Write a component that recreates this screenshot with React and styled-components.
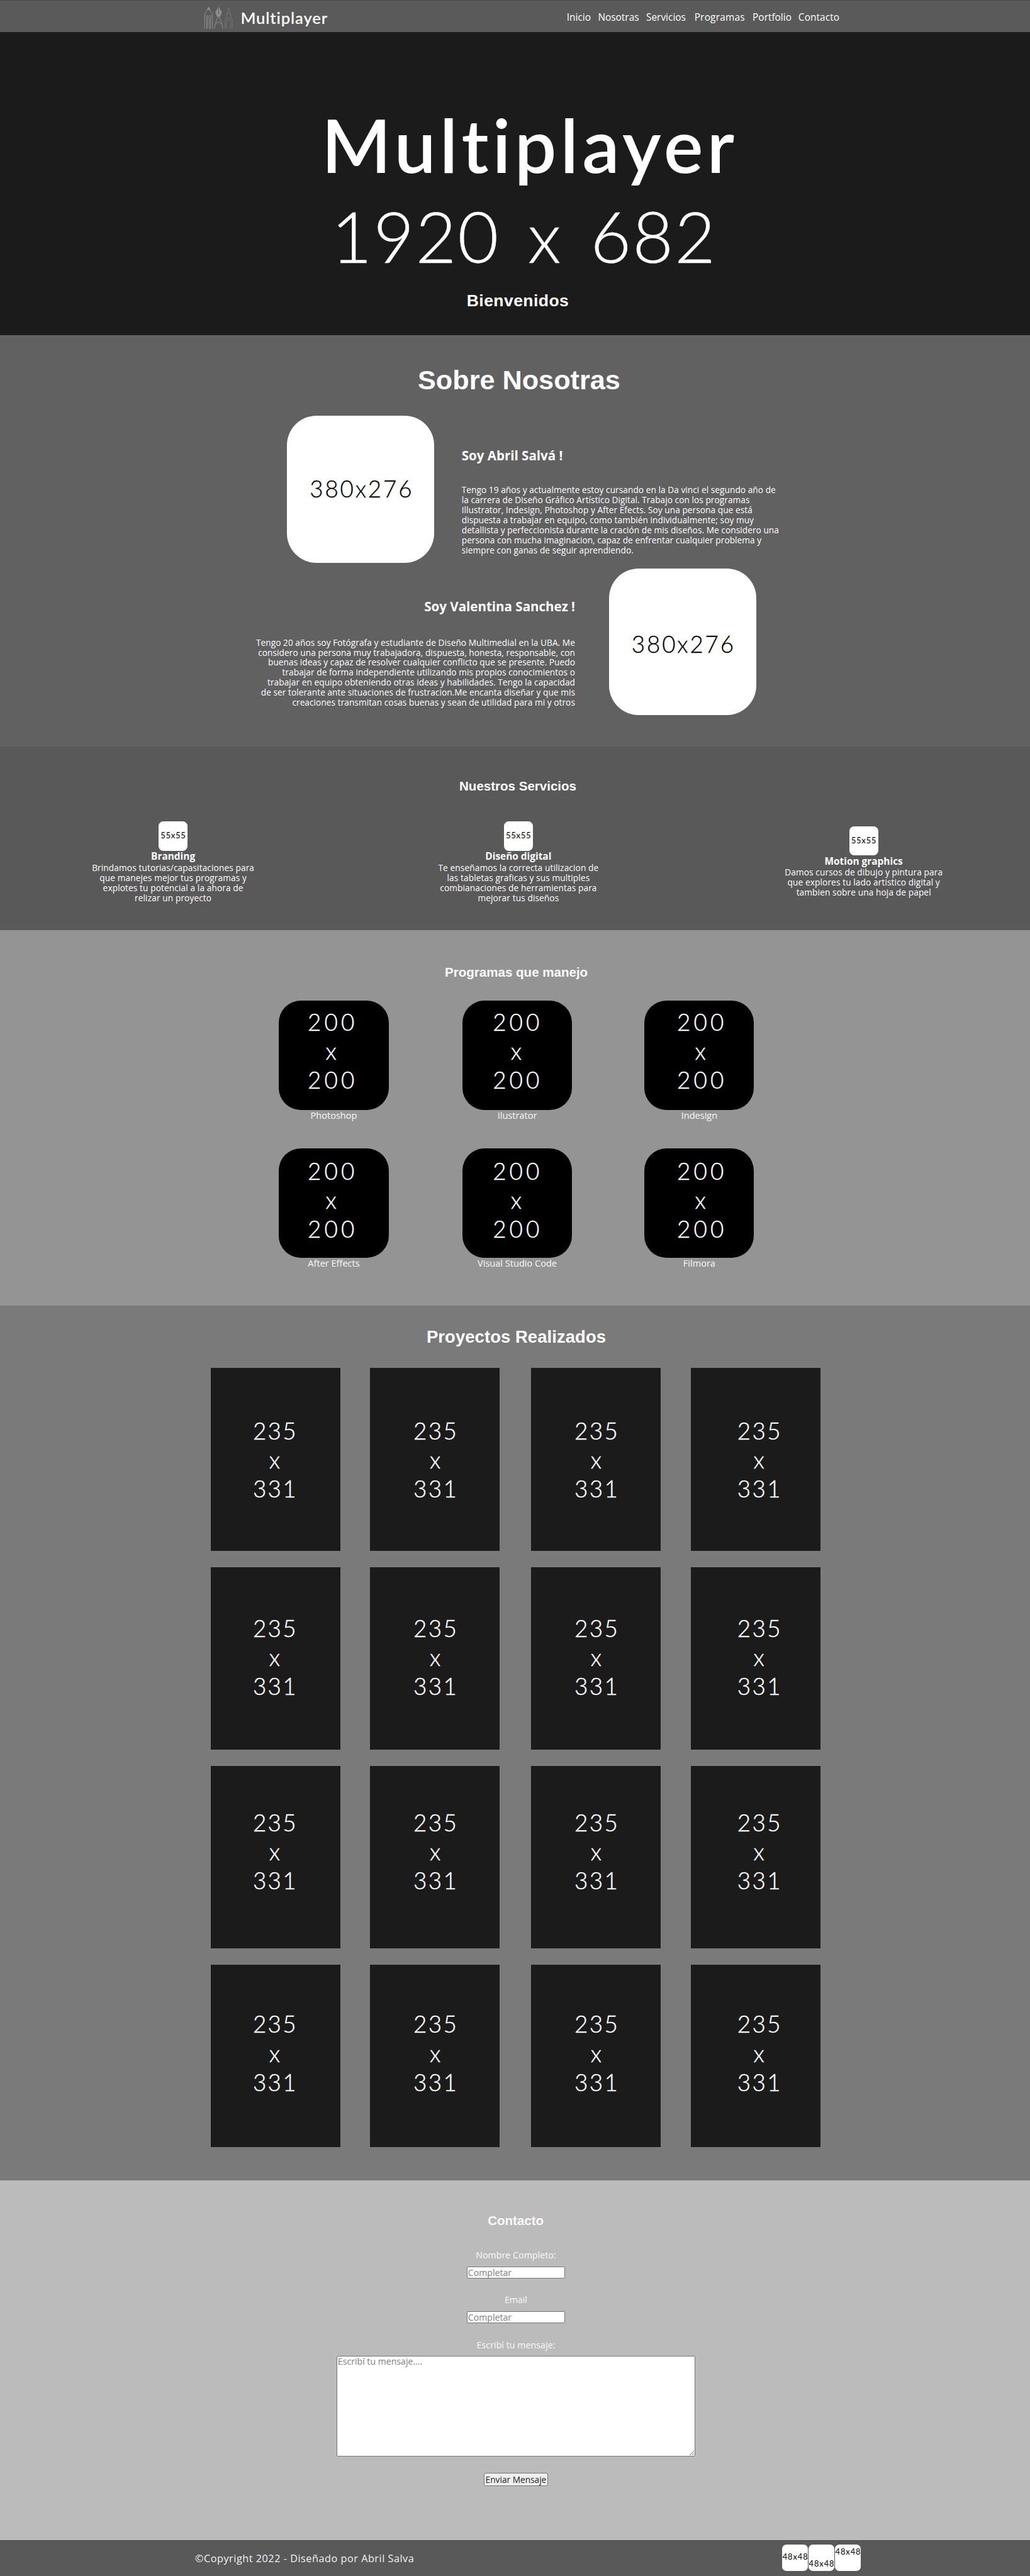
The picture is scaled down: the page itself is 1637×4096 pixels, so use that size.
import React from "react";
import styled, { createGlobalStyle, css } from "styled-components";

/* design pixel -> screen pixel */
const u = (n) => `${(n * 0.85617).toFixed(3)}px`;

const round = `"Open Sans", "Noto Sans", sans-serif`;
const display = `Lato, "Open Sans", sans-serif`;
const grotesk = `"Liberation Sans", Arial, sans-serif`;

const GlobalStyle = createGlobalStyle`
  * { box-sizing: border-box; margin: 0; padding: 0; }
  body { background: #bbbbbb; font-family: ${round}; }
`;

const centred = css`
  text-align: center;
  white-space: nowrap;
  letter-spacing: ${(p) => u(p.$ls || 0)};
  text-indent: ${(p) => u((p.$ls || 0) + 2 * (p.$dx || 0))};
`;

const Page = styled.div`
  width: 100%;
  height: ${u(4784)};
  overflow: hidden;
`;

const Header = styled.header`
  height: ${u(60)};
  display: flex;
  justify-content: space-between;
  align-items: center;
  padding: ${u(5)} ${u(330)} 0 ${u(378)};
  background: #5a5a5a;
  border-top: 1px solid #4c4c4c;
  color: #fff;
`;

const Brand = styled.div`
  display: flex;
  align-items: center;
  gap: ${u(14)};
`;

const BrandName = styled.span`
  font-family: ${display};
  font-size: ${u(30)};
  font-weight: 600;
  line-height: ${u(36)};
  letter-spacing: ${u(0.95)};
`;

const LogoArt = styled.svg`
  width: ${u(54.7)};
  height: ${u(42.3)};
  margin-top: ${u(-1)};
`;

const Nav = styled.nav`
  display: grid;
  grid-template-columns: ${[58, 89.5, 89.5, 108, 85, 100].map(u).join(" ")};
  font-size: ${u(18)};
  line-height: ${u(22)};
`;

const NavLink = styled.a`
  color: #fff;
  white-space: nowrap;
  letter-spacing: ${(p) => u(p.$ls)};
`;

const Hero = styled.section`
  height: ${u(562)};
  padding-top: ${u(138.6)};
  background: #1b1b1b;
  color: #fff;
`;

const HeroName = styled.h1`
  ${centred}
  font-family: ${display};
  font-size: ${u(138)};
  line-height: ${u(140)};
  font-weight: 600;
`;

const HeroSize = styled.p`
  ${centred}
  font-family: ${display};
  margin-top: ${u(34.7)};
  font-size: ${u(130.5)};
  line-height: ${u(130)};
  font-weight: 300;
  word-spacing: ${u(14)};
  -webkit-text-stroke: 0.6px #fff;
`;

const Title = styled.h2`
  ${centred}
  font-family: ${grotesk};
  font-weight: 700;
  font-size: ${(p) => u(p.$size || 24)};
  line-height: ${(p) => u(p.$line || 30)};
  margin-top: ${(p) => u(p.$top || 0)};
`;

const About = styled.section`
  height: ${u(764)};
  padding-top: ${u(54.5)};
  background: #616161;
  color: #fff;
`;

const Person = styled.article`
  display: flex;
  align-items: flex-start;
  margin-top: ${(p) => u(p.$top)};
  padding-left: ${(p) => u(p.$left)};
  gap: ${(p) => u(p.$gap)};
`;

const Portrait = styled.div`
  ${centred}
  flex: none;
  width: ${u(273.5)};
  height: ${u(272.7)};
  border-radius: ${u(55)};
  background: #fff;
  color: #000;
  font-family: ${display};
  font-size: ${u(43)};
  font-weight: 300;
  line-height: ${(p) => u(p.$line)};
  -webkit-text-stroke: 0.3px #000;
`;

const Bio = styled.div`
  width: ${u(627)};
  padding-top: ${(p) => u(p.$top)};
  text-align: ${(p) => (p.$right ? "right" : "left")};
`;

const BioName = styled.h3`
  font-size: ${u(24)};
  line-height: ${u(30)};
  font-weight: 700;
  margin-bottom: ${(p) => u(p.$gap)};
`;

const BioLine = styled.p`
  font-size: ${u(16)};
  line-height: ${u(18.55)};
  letter-spacing: ${u(0.05)};
  white-space: nowrap;
`;

const Services = styled.section`
  height: ${u(341)};
  padding-top: ${u(58.7)};
  background: #595959;
  color: #fff;
`;

const ServiceGrid = styled.div`
  display: grid;
  grid-template-columns: repeat(3, ${u(400)});
  column-gap: ${u(241)};
  margin-top: ${u(51.3)};
  padding-left: ${u(121.3)};
`;

const Service = styled.article`
  display: flex;
  flex-direction: column;
  align-items: center;
  padding-top: ${(p) => u(p.$top)};
`;

const ServiceIcon = styled.div`
  ${centred}
  width: ${u(54)};
  height: ${u(54)};
  border-radius: ${u(9)};
  background: #fff;
  color: #000;
  font-family: ${display};
  font-size: ${u(15.5)};
  font-weight: 400;
  line-height: ${u(51.5)};
`;

const ServiceName = styled.h3`
  ${centred}
  margin: ${u(2)} 0 ${u(2.2)};
  font-size: ${u(18)};
  line-height: ${u(18)};
  font-weight: 700;
`;

const ServiceLine = styled.p`
  ${centred}
  font-size: ${u(16)};
  line-height: ${u(18.65)};
`;

const Programs = styled.section`
  height: ${u(698)};
  padding-top: ${u(63)};
  background: #949494;
  color: #fafafa;
`;

const ProgramGrid = styled.div`
  display: grid;
  grid-template-columns: ${[340.5, 338, 203.5].map(u).join(" ")};
  row-gap: ${u(50.7)};
  margin-top: ${u(38.8)};
  padding-left: ${u(518)};
`;

const Program = styled.figure`
  width: ${u(203.3)};
`;

const ProgramTile = styled.div`
  height: ${u(203.3)};
  padding-top: ${(p) => u(p.$top)};
  border-radius: ${u(41)};
  background: #000;
  color: #fff;
`;

const SizeLine = styled.p`
  ${centred}
  font-family: ${display};
  font-size: ${u(43)};
  font-weight: 300;
  line-height: ${u(53.8)};
  -webkit-text-stroke: 0.4px #fff;
`;

const ProgramName = styled.figcaption`
  ${centred}
  font-size: ${u(17)};
  line-height: ${u(20)};
`;

const Portfolio = styled.section`
  height: ${u(1625)};
  padding-top: ${u(38)};
  background: #7a7a7a;
  color: #fff;
`;

const WorkGrid = styled.div`
  display: grid;
  grid-template-columns: ${[295.6, 299, 296.2, 241].map(u).join(" ")};
  row-gap: ${u(30.3)};
  margin-top: ${u(38)};
  padding-left: ${u(391.2)};
`;

const Work = styled.div`
  width: ${u(240.8)};
  height: ${u(339)};
  padding-top: ${(p) => u(p.$top)};
  background: #1b1b1b;
`;

const Contact = styled.section`
  height: ${u(667)};
  padding-top: ${u(58.7)};
  background: #bbbbbb;
  color: #fafafa;
`;

const Form = styled.form`
  display: flex;
  flex-direction: column;
  align-items: center;
  margin-top: ${u(39.8)};
  padding-left: ${u(3.4)};
`;

const Label = styled.label`
  ${centred}
  font-size: ${u(16.5)};
  line-height: ${u(20)};
  margin-bottom: ${u(10.5)};
`;

const field = css`
  border: 1px solid #767676;
  border-radius: 2px;
  background: #fff;
  color: #333;
  font-family: ${round};
  font-size: ${u(16.5)};
  padding: 0 1px;
  margin-bottom: ${u(30)};
  &::placeholder { color: #808080; }
`;

const Input = styled.input`
  ${field}
  width: ${u(182.5)};
  height: ${u(22.5)};
`;

const Message = styled.textarea`
  ${field}
  width: ${u(666)};
  height: ${u(187.6)};
  line-height: ${u(19)};
`;

const Send = styled.button`
  width: ${u(119)};
  height: ${u(24.5)};
  border: 1px solid #767676;
  border-radius: 3px;
  background: #efefef;
  color: #222;
  font-family: ${round};
  font-size: ${u(16)};
  white-space: nowrap;
`;

const Footer = styled.footer`
  height: ${u(67)};
  display: flex;
  justify-content: space-between;
  align-items: flex-start;
  padding: ${u(8)} ${u(314.5)} 0 ${u(362)};
  background: #595959;
  border-top: 1px solid #484848;
  color: #f2f2f2;
`;

const Copyright = styled.p`
  font-size: ${u(19)};
  line-height: ${u(51.5)};
  letter-spacing: ${u(0.6)};
  white-space: nowrap;
`;

const Socials = styled.div`
  display: flex;
  gap: ${u(1.7)};
`;

const Social = styled.div`
  ${centred}
  display: flex;
  justify-content: center;
  width: ${u(47.3)};
  height: ${u(49)};
  border-radius: ${u(8)};
  background: #fff;
  color: #000;
  font-family: ${display};
  font-size: ${u(15)};
  font-weight: 400;
  line-height: ${(p) => u(p.$line)};
`;

const Logo = () => (
  <LogoArt viewBox="55 33 164 127" fill="none" stroke="#8f8f8f" strokeWidth="3.5">
    <path d="M59 158V80L81 37l22 43v78M59 82c5 9 12 9 15 2 4 7 11 7 15 0 3 6 9 6 14-2M70 92v66M76 92v66M86 92v66M93 92v66" />
    <path d="M74 52l7-15 8 15z" fill="#8f8f8f" />
    <path d="M137 38l-17 28 10 24h14l10-24z" fill="#8f8f8f" />
    <path d="M137 42v24" stroke="#5a5a5a" />
    <circle cx="137" cy="70" r="4" fill="#5a5a5a" stroke="none" />
    <path d="M129 97h16M115 158v-13l14-44M160 158v-13l-15-44M122 134c5-16 26-16 30 0" />
    <g stroke="#747474">
      <path d="M190 54v-9l4-5 3 5v9zM186 72l3-17h9l3 17M180 98l4-26h18l5 26M173 158v-54l6-6h29l5 6v54M181 158v-48h23v48" />
    </g>
  </LogoArt>
);

const NAV = [
  ["Inicio", 0],
  ["Nosotras", 0],
  ["Servicios", 0],
  ["Programas", 0.25],
  ["Portfolio", 0],
  ["Contacto", 0.1],
];

const ABRIL = [
  "Tengo 19 años y actualmente estoy cursando en la Da vinci el segundo año de",
  "la carrera de Diseño Gráfico Artístico Digital. Trabajo con los programas",
  "Illustrator, Indesign, Photoshop y After Efects. Soy una persona que está",
  "dispuesta a trabajar en equipo, como también individualmente; soy muy",
  "detallista y perfeccionista durante la cración de mis diseños. Me considero una",
  "persona con mucha imaginacion, capaz de enfrentar cualquier problema y",
  "siempre con ganas de seguir aprendiendo.",
];

const VALENTINA = [
  "Tengo 20 años soy Fotógrafa y estudiante de Diseño Multimedial en la UBA. Me",
  "considero una persona muy trabajadora, dispuesta, honesta, responsable, con",
  "buenas ideas y capaz de resolver cualquier conflicto que se presente. Puedo",
  "trabajar de forma independiente utilizando mis propios conocimientos o",
  "trabajar en equipo obteniendo otras ideas y habilidades. Tengo la capacidad",
  "de ser tolerante ante situaciones de frustracion.Me encanta diseñar y que mis",
  "creaciones transmitan cosas buenas y sean de utilidad para mi y otros",
];

const SERVICES = [
  {
    name: "Branding",
    top: 0,
    lines: [
      "Brindamos tutorias/capasitaciones para",
      "que manejes mejor tus programas y",
      "explotes tu potencial a la ahora de",
      "relizar un proyecto",
    ],
  },
  {
    name: "Diseño digital",
    top: 0,
    lines: [
      "Te enseñamos la correcta utilizacion de",
      "las tabletas graficas y sus multiples",
      "combianaciones de herramientas para",
      "mejorar tus diseños",
    ],
  },
  {
    name: "Motion graphics",
    top: 8.5,
    lines: [
      "Damos cursos de dibujo y pintura para",
      "que explores tu lado artistico digital y",
      "tambien sobre una hoja de papel",
    ],
  },
];

const PROGRAMS = ["Photoshop", "Ilustrator", "Indesign", "After Effects", "Visual Studio Code", "Filmora"];
const PROGRAM_DX = [-5, -2, 2];
const WORK_TOP = [89.4, 86.5, 78.5, 83.5];
const WORK_DX = [-2, 0.5, 0.5, 6.5];

export default function App() {
  return (
    <Page>
      <GlobalStyle />
      <Header>
        <Brand>
          <Logo />
          <BrandName>Multiplayer</BrandName>
        </Brand>
        <Nav>
          {NAV.map(([label, ls]) => (
            <NavLink key={label} $ls={ls}>{label}</NavLink>
          ))}
        </Nav>
      </Header>

      <Hero>
        <HeroName $ls={7} $dx={24}>Multiplayer</HeroName>
        <HeroSize $ls={2.6} $dx={15.5}>1920 x 682</HeroSize>
        <Title as="p" $size={31} $line={36} $top={37} $ls={0.5} $dx={5}>Bienvenidos</Title>
      </Hero>

      <About>
        <Title $size={50.5} $line={60} $dx={7.5}>Sobre Nosotras</Title>
        <Person $top={36} $left={533} $gap={50.5}>
          <Portrait $ls={3.3} $line={272.7}>380x276</Portrait>
          <Bio $top={59}>
            <BioName $gap={39.5}>Soy Abril Salvá !</BioName>
            {ABRIL.map((line) => <BioLine key={line}>{line}</BioLine>)}
          </Bio>
        </Person>
        <Person $top={10.7} $left={440.5} $gap={63}>
          <Bio $top={56.5} $right>
            <BioName $gap={41.7}>Soy Valentina Sanchez !</BioName>
            {VALENTINA.map((line) => <BioLine key={line}>{line}</BioLine>)}
          </Bio>
          <Portrait $ls={3.3} $line={281}>380x276</Portrait>
        </Person>
      </About>

      <Services>
        <Title $dx={5.3}>Nuestros Servicios</Title>
        <ServiceGrid>
          {SERVICES.map((s) => (
            <Service key={s.name} $top={s.top}>
              <ServiceIcon $ls={0.7}>55x55</ServiceIcon>
              <ServiceName>{s.name}</ServiceName>
              {s.lines.map((line) => <ServiceLine key={line} $ls={0.12}>{line}</ServiceLine>)}
            </Service>
          ))}
        </ServiceGrid>
      </Services>

      <Programs>
        <Title $dx={2.5}>Programas que manejo</Title>
        <ProgramGrid>
          {PROGRAMS.map((name, i) => (
            <Program key={name}>
              <ProgramTile $top={i < 3 ? 12.5 : 15}>
                {["200", "x", "200"].map((t, k) => (
                  <SizeLine key={k} $ls={6} $dx={PROGRAM_DX[i % 3]}>{t}</SizeLine>
                ))}
              </ProgramTile>
              <ProgramName>{name}</ProgramName>
            </Program>
          ))}
        </ProgramGrid>
      </Programs>

      <Portfolio>
        <Title $size={32} $line={40} $dx={2.3} $ls={0.12}>Proyectos Realizados</Title>
        <WorkGrid>
          {WORK_TOP.flatMap((top, r) =>
            WORK_DX.map((dx, c) => (
              <Work key={`${r}-${c}`} $top={top}>
                {["235", "x", "331"].map((t) => (
                  <SizeLine key={t} $ls={2.8} $dx={dx}>{t}</SizeLine>
                ))}
              </Work>
            ))
          )}
        </WorkGrid>
      </Portfolio>

      <Contact>
        <Title $dx={1.4}>Contacto</Title>
        <Form>
          <Label $ls={0.1}>Nombre Completo:</Label>
          <Input placeholder="Completar" />
          <Label>Email</Label>
          <Input placeholder="Completar" />
          <Label $ls={0.1}>Escribí tu mensaje:</Label>
          <Message placeholder="Escribí tu mensaje...." />
          <Send type="button">Enviar Mensaje</Send>
        </Form>
      </Contact>

      <Footer>
        <Copyright>©Copyright 2022 - Diseñado por Abril Salva</Copyright>
        <Socials>
          <Social $ls={1.1} $line={45}>48x48</Social>
          <Social $ls={1.1} $line={70.4}>48x48</Social>
          <Social $ls={1.1} $line={26.4}>48x48</Social>
        </Socials>
      </Footer>
    </Page>
  );
}
